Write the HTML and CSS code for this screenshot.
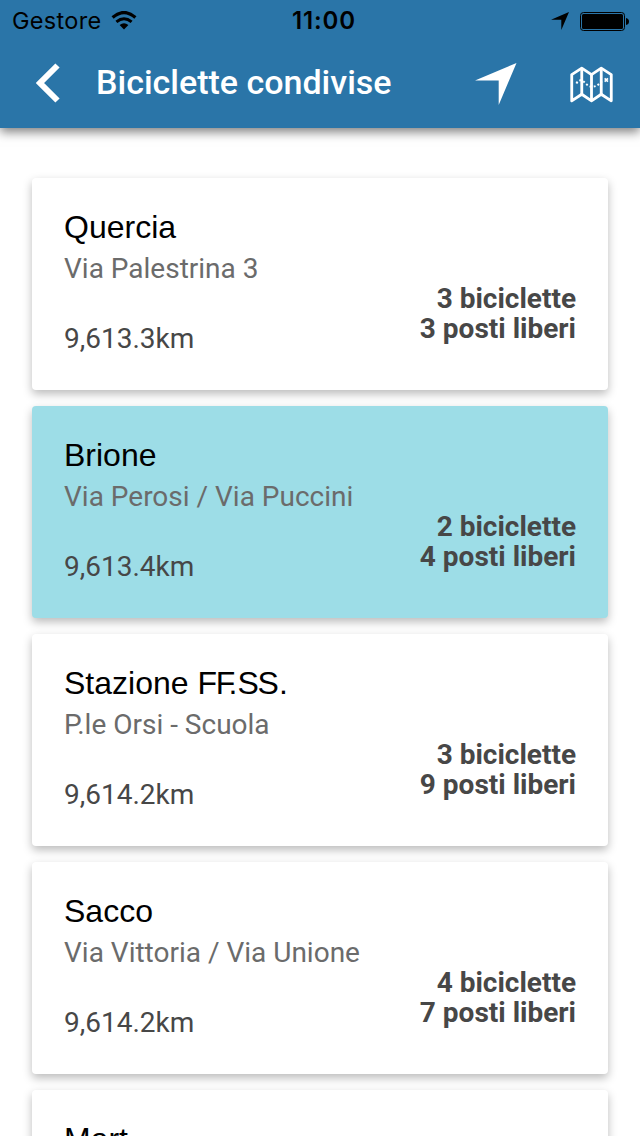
FILE: index.html
```html
<!DOCTYPE html>
<html lang="it">
<head>
<meta charset="utf-8">
<title>Biciclette condivise</title>
<link rel="stylesheet" href="styles.css">
</head>
<body>
<header class="top">
  <div class="status">
    <div class="status-left">
      <span class="carrier">Gestore</span>
      <svg class="wifi" width="26" height="20" viewBox="0 0 26 20" fill="none" stroke="#000"><path d="M1.600 6.500Q13-3.500 24.400 6.500" stroke-width="3.200"/><path d="M5.400 10.800Q13 4.600 20.600 10.800" stroke-width="3"/><path d="M13 18.500L8.600 14Q13 10.500 17.400 14Z" fill="#000" stroke="none"/></svg>
    </div>
    <span class="clock">11:00</span>
    <div class="status-right">
      <svg class="loc" width="18" height="18" viewBox="0 0 18 18"><path d="M0 7.700L18 0L10.300 18V7.700Z"/></svg>
      <svg class="battery" width="50" height="19" viewBox="0 0 50 19"><rect x=".5" y=".5" width="44" height="18" rx="3" fill="none" stroke="#000"/><rect x="2" y="2" width="41" height="15" rx="1.500"/><path d="M46 6Q49 6.500 49 9.500T46 13Z"/></svg>
    </div>
  </div>
  <nav class="bar">
    <svg class="back" width="24" height="40" viewBox="0 0 24 40" fill="none" stroke="#fff" stroke-width="6"><path d="M21.500 2.500L4 20L21.500 37.500"/></svg>
    <h1 class="heading">Biciclette condivise</h1>
    <svg class="locate" width="42" height="42" viewBox="0 0 42 42" fill="#fff"><path d="M0 17.500L41.500 0L23.700 42V17.500Z"/></svg>
    <svg class="map" width="43" height="37" viewBox="0 0 44 38" fill="none" stroke="#fff"><path d="M1.700 8.800L12 2.200L22 8.800L32 2.200L42.300 8.800V35.800L32 29L22 35.800L12 29L1.700 35.800Z" stroke-width="2.900" stroke-linejoin="round"/><path d="M12 2V29M22 8V35M32 2V29" stroke-width="2.900"/><path d="M6.500 17.900Q8.500 14.500 11 14.700C15 15 17 21 22 21.200S29 19.500 34 14.600" stroke-width="2" stroke-dasharray="2 2.200"/><path d="M35.500 12.700L38.900 16.100M38.900 12.700L35.500 16.100" stroke-width="1.700"/></svg>
  </nav>
</header>
<main class="list">
  <article class="card">
    <h2 class="name">Quercia</h2>
    <p class="address">Via Palestrina 3</p>
    <p class="distance">9,613.3km</p>
    <p class="counts">3 biciclette<br>3 posti liberi</p>
  </article>
  <article class="card selected">
    <h2 class="name">Brione</h2>
    <p class="address">Via Perosi / Via Puccini</p>
    <p class="distance">9,613.4km</p>
    <p class="counts">2 biciclette<br>4 posti liberi</p>
  </article>
  <article class="card">
    <h2 class="name">Stazione <span class="snug">F</span><span class="tight">F</span>.<span class="snug">S</span>S.</h2>
    <p class="address">P.le Orsi - Scuola</p>
    <p class="distance">9,614.2km</p>
    <p class="counts">3 biciclette<br>9 posti liberi</p>
  </article>
  <article class="card">
    <h2 class="name">Sacco</h2>
    <p class="address">Via Vittoria / Via Unione</p>
    <p class="distance">9,614.2km</p>
    <p class="counts">4 biciclette<br>7 posti liberi</p>
  </article>
  <article class="card">
    <h2 class="name">Mart</h2>
  </article>
</main>
</body>
</html>
```
FILE: styles.css
```css
* {
  box-sizing: border-box;
  margin: 0;
  padding: 0;
}

body {
  display: flex;
  flex-direction: column;
  height: 1136px;
  overflow: hidden;
  background: #fff;
  font-family: Roboto, sans-serif;
}

svg {
  display: block;
  flex: none;
}

.top {
  flex: none;
  height: 128px;
  background: #2a75a8;
  box-shadow: 0 4px 10px rgba(0, 0, 0, .5);
}

.status {
  display: grid;
  grid-template-columns: 1fr auto 1fr;
  align-items: center;
  height: 40px;
  padding: 1px 10px 0 12px;
  font-family: Inter, sans-serif;
  color: #000;
}

.status-left,
.status-right {
  display: flex;
  align-items: center;
}

.status-left {
  gap: 10px;
}

.status-right {
  justify-content: flex-end;
  gap: 11px;
}

.carrier {
  font-size: 23.500px;
  line-height: 40px;
  letter-spacing: .3px;
}

.clock {
  padding-left: 6px;
  font-size: 24px;
  font-weight: 600;
  line-height: 40px;
  letter-spacing: .9px;
}

.bar {
  display: flex;
  align-items: center;
  height: 88px;
  padding: 0 27px 2px 36px;
}

.heading {
  flex: 1;
  margin-left: 36px;
  padding-bottom: 2px;
  font-size: 34px;
  font-weight: 500;
  line-height: 84px;
  white-space: nowrap;
  color: #fff;
}

.locate {
  margin-top: 2px;
}

.map {
  margin: 3px 0 0 53px;
}

.list {
  display: flex;
  flex-direction: column;
  gap: 16px;
  padding: 50px 32px 0;
}

.card {
  display: grid;
  flex: none;
  grid-template-columns: 1fr auto;
  grid-template-rows: 36px 36px 34px 34px;
  height: 212px;
  padding: 32px;
  border-radius: 4px;
  background: #fff;
  box-shadow: 0 4px 10px rgba(0, 0, 0, .27);
}

.selected {
  background: #9ddde7;
}

.name {
  grid-area: 1 / 1 / 2 / 3;
  font-family: "Liberation Sans", sans-serif;
  font-size: 32px;
  font-weight: 400;
  line-height: 34px;
  color: #000;
}

.snug {
  letter-spacing: -1.200px;
}

.tight {
  letter-spacing: -6.800px;
}

.address {
  grid-area: 2 / 1 / 3 / 3;
  font-size: 28px;
  line-height: 46px;
  color: #6b6b6b;
}

.distance {
  grid-area: 4 / 1 / 5 / 2;
  font-size: 28px;
  line-height: 46px;
  color: #474747;
}

.counts {
  grid-area: 3 / 2 / 5 / 3;
  padding-top: 2px;
  font-size: 28px;
  font-weight: 700;
  line-height: 30px;
  text-align: right;
  color: #474747;
}
```
